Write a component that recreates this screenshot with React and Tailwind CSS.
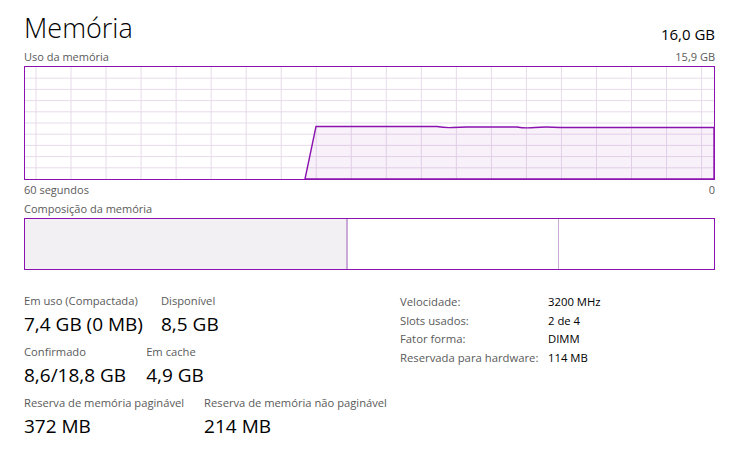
import React from "react";

const font = { fontFamily: '"Open Sans", "Noto Sans", sans-serif' };

const vLines = Array.from({ length: 20 }, (_, i) => 11 + i * 35.03);
const hLines = Array.from({ length: 9 }, (_, i) => 11.2 * (i + 1));

const Graph = () => (
  <div className="h-[114px] border border-[#8b12ae]">
    <svg width="689" height="112" className="block">
      {vLines.map((x) => (
        <line key={"v" + x} x1={x} y1="0" x2={x} y2="112" stroke="#e7dbeb" strokeWidth="1" />
      ))}
      {hLines.map((y) => (
        <line key={"h" + y} x1="0" y1={y} x2="689" y2={y} stroke="#e7dbeb" strokeWidth="1" />
      ))}
      <path
        d="M280 112 L291 59.5 L412 59.5 Q420 61 428 60.5 L442 60 L492 60 Q500 61.5 510 60.5 Q520 59.5 535 60.5 L689 60.5 L689 112 Z"
        fill="#8b12ae"
        fillOpacity="0.06"
        stroke="#8b12ae"
        strokeWidth="1.4"
      />
    </svg>
  </div>
);

const Stat = ({ label, value }) => (
  <div className="flex flex-col">
    <span className="text-[11.2px] leading-[16px] text-[#5a5a5a]">{label}</span>
    <span className="text-[19px] leading-[31px] text-black">{value}</span>
  </div>
);

const Info = ({ label, value }) => (
  <div className="flex h-[18.7px] items-center text-[11.3px]">
    <span className="w-[148px] text-[#5a5a5a]">{label}</span>
    <span className="text-black">{value}</span>
  </div>
);

export default function App() {
  return (
    <div className="w-[731px] h-[468px] bg-white pl-6 pr-4 overflow-hidden" style={font}>
      <div className="flex items-end justify-between pt-[10px]">
        <h1 className="text-[27px] leading-[36px] font-light text-black">Memória</h1>
        <span className="text-[15px] leading-[22px] text-black pb-[1px]">16,0 GB</span>
      </div>
      <div className="flex justify-between text-[11px] leading-[18px] text-[#5a5a5a] mt-[2px]">
        <span>Uso da memória</span>
        <span>15,9 GB</span>
      </div>
      <Graph />
      <div className="flex justify-between text-[11px] leading-[17px] text-[#5a5a5a] mt-[1px]">
        <span>60 segundos</span>
        <span>0</span>
      </div>
      <div className="text-[11px] leading-[18px] text-[#5a5a5a] mt-[2px]">Composição da memória</div>
      <div className="flex h-[52px] border border-[#8b12ae]">
        <div className="w-[323px] bg-[#f3f0f4] border-r-2 border-[#c9a9d6]" />
        <div className="w-[211px] border-r border-[#c9a9d6]" />
        <div className="flex-1" />
      </div>
      <div className="flex mt-[23px]">
        <div className="w-[376px] flex flex-col gap-[4px]">
          <div className="flex gap-[18px]">
            <Stat label="Em uso (Compactada)" value="7,4 GB (0 MB)" />
            <Stat label="Disponível" value="8,5 GB" />
          </div>
          <div className="flex gap-[20px]">
            <Stat label="Confirmado" value="8,6/18,8 GB" />
            <Stat label="Em cache" value="4,9 GB" />
          </div>
          <div className="flex gap-[20px]">
            <Stat label="Reserva de memória paginável" value="372 MB" />
            <Stat label="Reserva de memória não paginável" value="214 MB" />
          </div>
        </div>
        <div className="flex flex-col">
          <Info label="Velocidade:" value="3200 MHz" />
          <Info label="Slots usados:" value="2 de 4" />
          <Info label="Fator forma:" value="DIMM" />
          <Info label="Reservada para hardware:" value="114 MB" />
        </div>
      </div>
    </div>
  );
}
